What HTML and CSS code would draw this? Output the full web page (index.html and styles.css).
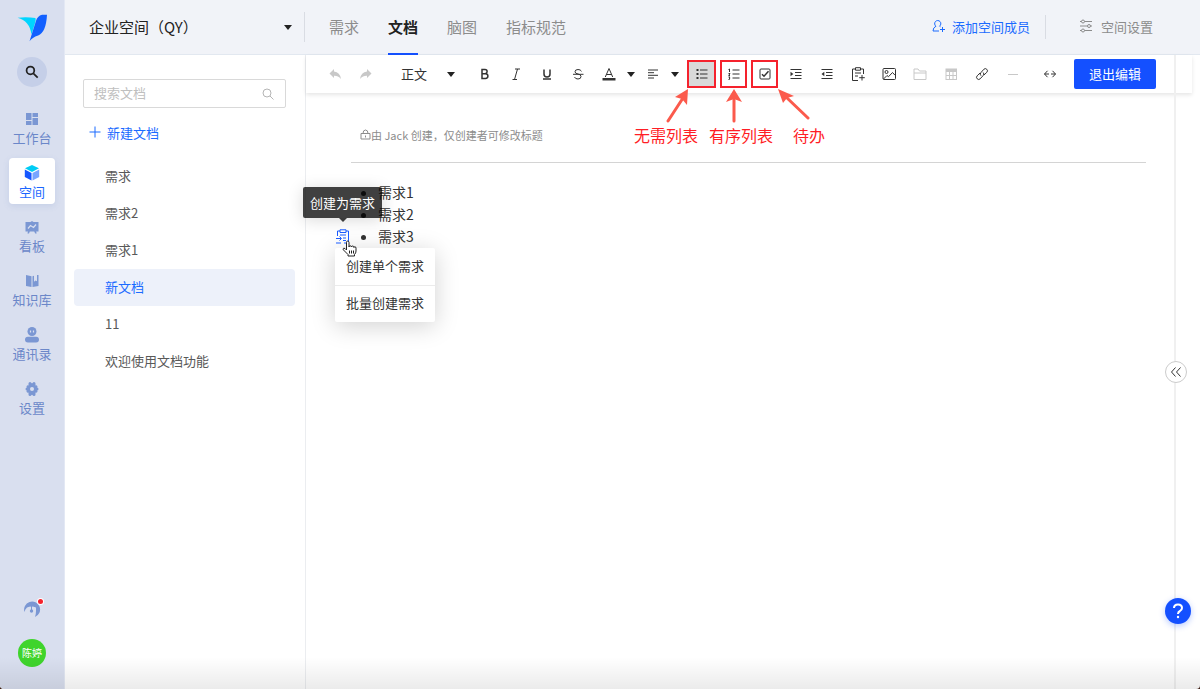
FILE: index.html
```html
<!DOCTYPE html>
<html lang="zh-CN">
<head>
    <meta charset="UTF-8">
    <meta name="viewport" content="width=device-width, initial-scale=1.0">
    <title>企业空间 - 文档</title>
    <link rel="stylesheet" href="styles.css">
</head>
<body>
<div class="app">
    <aside class="sidebar">
        <svg class="logo" viewBox="48 42 94 84">
            <path fill="#00d5ff" d="M50 53Q76 49 104 54Q106 60 103 68L92 104Q86 62 50 53Z"/>
            <path fill="#1260ff" d="M139 44H124Q110 47 105 64L86 124Q94 113 112 107Q136 98 139 44Z"/>
        </svg>
        <button class="search-btn" aria-label="搜索">
            <svg viewBox="0 0 16 16"><circle cx="6.2" cy="6.2" r="4.4"/><path d="M9.5 9.5L14.5 14.5"/></svg>
        </button>
        <nav class="nav">
            <a href="#"><svg viewBox="0 0 16 16"><path d="M2 2h5.500v7H2zM8.500 2H14v4H8.500zM2 10h5.500v4H2zM8.500 7H14v7H8.500z"/></svg>工作台</a>
            <a href="#" class="active"><svg viewBox="0 0 16 16"><path fill="#00ccf5" d="M8 0l7 3.2L8 7 1 3.2z"/><path fill="#1557ff" d="M.8 4.5L7.5 8v7.6L.8 12z"/><path fill="#78a5ff" d="M15.2 4.5L8.5 8v7.6l6.7-3.6z"/></svg>空间</a>
            <a href="#"><svg viewBox="0 0 16 16"><path d="M1.500 3h5L8 2l1.500 1h5v9.500h-13zM4 12h2l-1 2.500H3.500zM10 12h2l.7 2.500h-1.500z"/><path class="cut" d="M4 9.500l2.500-3 3 2L12 5.500"/></svg>看板</a>
            <a href="#"><svg viewBox="0 0 16 16"><path d="M2 2l5.500 1.200V14L2 13zM8.500 3.200L10 2.800v6l1.500-1.300L13 8.300V2h1.500v11l-6 1z"/></svg>知识库</a>
            <a href="#"><svg viewBox="0 0 16 16"><circle cx="8" cy="4.500" r="4.500"/><rect x="1" y="9.700" width="14" height="5.800" rx="2.900"/><path class="cut" d="M6.500 3.500v2M9.500 3.500v2"/></svg>通讯录</a>
            <a href="#"><svg viewBox="0 0 16 16"><path class="lobes" d="M8 3.500v9M4 5.700l8 4.600M4 10.300l8-4.600"/><path class="lobes" d="M6 2.500v11M10 2.500v11M3 8h10"/><circle class="hole" cx="8" cy="8" r="2"/></svg>设置</a>
        </nav>
        <div class="sidebar-foot">
            <button class="service" aria-label="客服">
                <svg viewBox="0 0 18 18"><path d="M1.500 12A8 8 0 1 1 12 17Q13 14 13 11V7.500q-4.500-2-9 0Q2 9 1.500 12z"/><path class="pin" d="M8.500 6v4.500"/><circle class="knob" cx="8.500" cy="11" r="1.700"/></svg>
                <span class="dot"></span>
            </button>
            <button class="avatar">陈婷</button>
        </div>
    </aside>

    <div class="workspace">
        <header class="header">
            <div class="space-select">
                <select aria-label="空间">
                    <option>企业空间（QY）</option>
                </select>
            </div>
            <nav class="tabs">
                <a href="#">需求</a>
                <a href="#" class="active">文档</a>
                <a href="#">脑图</a>
                <a href="#">指标规范</a>
            </nav>
            <a href="#" class="add-member">
                <svg viewBox="0 0 14 14"><path d="M4 7.200a3.100 3.100 0 1 1 3.500 0M4 7.200Q1 8.500 1 12h6M7.500 7.200l1 .6M10.500 8v5M8 10.500h5"/></svg>添加空间成员
            </a>
            <a href="#" class="space-setting">
                <svg viewBox="0 0 14 14"><path d="M1 2.500h1.500M5.500 2.500H13M1 7h7.500M11.500 7H13M1 11.500h1.500M5.500 11.500H13"/><circle cx="4" cy="2.500" r="1.500"/><circle cx="10" cy="7" r="1.500"/><circle cx="4" cy="11.500" r="1.500"/></svg>空间设置
            </a>
        </header>

        <div class="body">
            <section class="docs">
                <label class="doc-search">
                    <input type="text" placeholder="搜索文档" aria-label="搜索文档">
                    <svg viewBox="0 0 14 14"><circle cx="6" cy="6" r="4"/><path d="M9 9l3.500 3.500"/></svg>
                </label>
                <button class="new-doc">
                    <svg viewBox="0 0 12 12"><path d="M6 .5v11M.5 6h11"/></svg>新建文档
                </button>
                <div class="doc-list">
                    <a href="#">需求</a>
                    <a href="#">需求2</a>
                    <a href="#">需求1</a>
                    <a href="#" class="active">新文档</a>
                    <a href="#">11</a>
                    <a href="#">欢迎使用文档功能</a>
                </div>
            </section>

            <main class="editor">
                <div class="toolbar">
                    <button class="tool off" aria-label="撤销"><svg viewBox="0 0 14 14"><path class="fill" d="M6 2v2.500q6 .5 7 7.500Q10 8.500 6 8.700V11L1.500 6.500z"/></svg></button>
                    <button class="tool off" aria-label="重做"><svg viewBox="0 0 14 14"><path class="fill" d="M8 2v2.500Q2 5 1 12q3-3.500 7-3.300V11l4.500-4.500z"/></svg></button>
                    <div class="format">
                        <select aria-label="段落格式">
                            <option>正文</option>
                        </select>
                    </div>
                    <button class="tool" aria-label="加粗"><svg viewBox="0 0 14 14"><path class="bold" d="M4 2.500v9h3.500a2.300 2.300 0 0 0 0-4.800H4h3a2.100 2.100 0 0 0 0-4.200z"/></svg></button>
                    <button class="tool" aria-label="斜体"><svg viewBox="0 0 14 14"><path d="M6 2h5M3.500 12.500h4.500M8.500 2l-3 10.500"/></svg></button>
                    <button class="tool" aria-label="下划线"><svg viewBox="0 0 14 14"><path class="bold" d="M4 2.500V7q0 3 3 3t3-3V2.500M3 12h8"/></svg></button>
                    <button class="tool" aria-label="删除线"><svg viewBox="0 0 14 14"><path d="M10.500 4.300Q9.500 2.500 7 2.500q-3 0-3 2.300Q4 6.500 7 7t3 2.500q0 2.500-3 2.500-2.700 0-3.500-2M2 7.300h10.500"/></svg></button>
                    <button class="tool" aria-label="字体颜色"><svg viewBox="0 0 14 14"><path d="M3.300 10L7 1.500 10.700 10M4.500 7.500h5"/><path class="fill" d="M.5 11h13v2.500H.5z"/></svg></button>
                    <button class="caret" aria-label="选择颜色"></button>
                    <button class="tool flush" aria-label="对齐"><svg viewBox="0 0 14 14"><path d="M2 3h10M2 5.700h6M2 8.300h10M2 11h6"/></svg></button>
                    <button class="caret" aria-label="选择对齐"></button>
                    <button class="tool marked on" aria-label="无序列表"><svg viewBox="0 0 14 14"><path d="M5 3h7.500M5 7h7.500M5 11h7.500"/><path class="fill" d="M1.500 2h2v2h-2zM1.500 6h2v2h-2zM1.500 10h2v2h-2z"/></svg></button>
                    <button class="tool marked" aria-label="有序列表"><svg viewBox="0 0 14 14"><path d="M5.500 3h7M5.500 7h7M5.500 11h7M1.500 2.500l1-.5v3M1.500 6.500h1.500l-1.300 2H3M1.500 10H3l-.8 1L3 12l-1.500.5"/></svg></button>
                    <button class="tool marked" aria-label="待办"><svg viewBox="0 0 14 14"><rect x="2" y="2" width="10" height="10" rx="1"/><path class="bold" d="M4 7.200l2 2 4.500-5"/></svg></button>
                    <button class="tool" aria-label="增加缩进"><svg viewBox="0 0 14 14"><path d="M1.500 2.500h11M6 5.500h6.500M6 8.500h6.500M1.500 11.500h11"/><path class="fill" d="M1.500 4.700v4.600L4.300 7z"/></svg></button>
                    <button class="tool" aria-label="减少缩进"><svg viewBox="0 0 14 14"><path d="M1.500 2.500h11M6 5.500h6.500M6 8.500h6.500M1.500 11.500h11"/><path class="fill" d="M4.300 4.700v4.600L1.500 7z"/></svg></button>
                    <button class="tool" aria-label="插入需求"><svg viewBox="0 0 14 14"><path d="M4 2H1.500v11.500H7M10 2h2.500v5M4.500.7h5v2.500h-5zM4 6h6M4 9h3M11 8v5.500M8.200 10.700h5.600"/></svg></button>
                    <button class="tool" aria-label="图片"><svg viewBox="0 0 14 14"><rect x="1" y="1.500" width="12.500" height="11" rx="1"/><circle cx="4.500" cy="5" r="1.500"/><path d="M1.500 12L5 8.500l1.500 1.200 4-4.200 2.500 2.700"/></svg></button>
                    <button class="tool off" aria-label="文件"><svg viewBox="0 0 14 14"><path d="M1 2h4l1.500 2H13v8.500H1zM1 6h12"/></svg></button>
                    <button class="tool off" aria-label="表格"><svg viewBox="0 0 14 14"><rect x="2" y="2" width="10.500" height="10.500"/><path class="fill" d="M2 2h10.500v3H2z"/><path d="M2 8.500h10.500M5.500 4v8.500M9 4v8.500"/></svg></button>
                    <button class="tool" aria-label="链接"><svg viewBox="0 0 14 14"><path d="M6 8.700q-1.700-1.500 0-3.200l2.800-3.200q1.500-1.500 3 0t0 3L9 8M8.200 5.500q1.500 1.500 0 3l-3 3.300q-1.500 1.500-3 0t0-3L5 6"/></svg></button>
                    <button class="tool off" aria-label="分割线"><svg viewBox="0 0 14 14"><path d="M2 7.500h10"/></svg></button>
                    <button class="tool wide" aria-label="页宽"><svg viewBox="0 0 14 14"><path d="M4.500 3.800L1.500 7l3 3.200M9.500 3.800l3 3.200-3 3.200M1.500 7H6M8 7h4.500"/></svg></button>
                    <button class="exit">退出编辑</button>
                </div>

                <div class="notes">
                    <svg viewBox="0 0 200 36">
                        <path d="M36 34L51 11M102 34V12M176 31L154 10"/>
                        <path class="head" d="M56 2L43 10l7 2 5 6zM102 2l-8 13 8-3 8 3zM146 2l5 14 4-5 7-2z"/>
                    </svg>
                    <div class="note-labels"><span>无需列表</span><span>有序列表</span><span>待办</span></div>
                </div>

                <article class="page">
                    <p class="meta">
                        <svg viewBox="0 0 11 11"><path d="M1 4.500h9v5.500H1zM3 4.500q0-3.500 2.500-3.500T8 4.500M5.500 6.500v2"/></svg>由 Jack 创建，仅创建者可修改标题
                    </p>
                    <ul class="content">
                        <li>需求1</li>
                        <li>需求2</li>
                        <li>需求3
                            <div class="block-tools">
                                <button class="convert" aria-label="创建为需求"><svg viewBox="0 0 16 16"><path d="M2.500 7V2H5M11 2h2.500v12H9M5 .8h6v2.700H5zM5 6h6M8 9h3M8 11.500h3M1 9.500h5M1 14h5M4.500 7.500l2 2-2 2"/></svg></button>
                                <div class="tooltip">创建为需求</div>
                                <div class="menu">
                                    <button>创建单个需求</button>
                                    <button>批量创建需求</button>
                                </div>
                                <svg class="hand" viewBox="0 0 15 17"><path d="M4.500 10V2.500q0-1.500 1.200-1.500T7 2.500V7q0-1.200 1.200-1.200T9.500 7q0-1 1.200-1t1.200 1.500q.2-.8 1.100-.8t1 1.500V11q0 2-1.500 3.500V16H6v-1.500L1.300 9.800Q.7 8.500 1.800 8.200T4.500 10zM7.500 10.500v3M9.500 10.500v3M11.500 10.500v3"/></svg>
                            </div>
                        </li>
                    </ul>
                </article>

                <div class="rail">
                    <button class="collapse" aria-label="展开"><svg viewBox="0 0 12 12"><path d="M5.500 1.500L1.500 6l4 4.500M10.500 1.500L6.500 6l4 4.500"/></svg></button>
                    <button class="help" aria-label="帮助"><svg viewBox="0 0 14 16"><path d="M3 5q0-3.500 4-3.500T11 5q0 1.700-2 3-2 1-2 3"/><circle cx="7" cy="14" r="1.200"/></svg></button>
                </div>
            </main>
        </div>
    </div>
    <div class="fade"></div>
</div>
</body>
</html>
```

FILE: styles.css
```css
* {
    box-sizing: border-box;
}
body {
    margin: 0;
    background: #3b1c12;
    color: #333;
    font-family: "Noto Sans CJK SC", sans-serif;
    font-size: 13px;
}
a {
    color: inherit;
    text-decoration: none;
}
button, select, input {
    font: inherit;
    color: inherit;
    border: none;
    background: none;
    padding: 0;
    margin: 0;
    outline: none;
}
button {
    cursor: pointer;
}
select {
    appearance: none;
}
svg {
    display: block;
    flex: none;
    fill: none;
    stroke: currentColor;
}
.app {
    position: relative;
    display: flex;
    min-height: 100vh;
    background: #fff;
    border-radius: 0 0 4px 4px;
    overflow: hidden;
}
.fade {
    position: absolute;
    left: 0;
    right: 0;
    bottom: 0;
    height: 32px;
    background: linear-gradient(rgba(0, 0, 0, 0), rgba(0, 0, 0, 0.08));
    pointer-events: none;
}

/* sidebar */
.sidebar {
    flex: none;
    width: 65px;
    padding-top: 14px;
    display: flex;
    flex-direction: column;
    align-items: center;
    background: #d9dfef;
    border-right: 1px solid #e3e8f4;
}
.logo {
    width: 31px;
    height: 28px;
    stroke: none;
}
.search-btn {
    width: 30px;
    height: 30px;
    margin-top: 15px;
    display: flex;
    align-items: center;
    justify-content: center;
    border-radius: 50%;
    background: #c5cfe8;
    color: #222;
}
.search-btn svg {
    width: 14px;
    height: 14px;
    stroke-width: 2;
}
.nav {
    display: flex;
    flex-direction: column;
    gap: 8px;
    margin-top: 17px;
}
.nav a {
    width: 46px;
    height: 46px;
    padding-top: 7px;
    display: flex;
    flex-direction: column;
    align-items: center;
    border-radius: 4px;
    color: #6b87c9;
    line-height: 21px;
}
.nav svg {
    width: 16px;
    height: 16px;
    fill: #7b97d3;
    stroke: none;
}
.nav .cut {
    fill: none;
    stroke: #d9dfef;
    stroke-width: 1.2;
}
.nav .lobes {
    stroke: #7b97d3;
    stroke-width: 3;
    stroke-linecap: round;
}
.nav .hole {
    fill: #d9dfef;
}
.nav .active {
    background: #fff;
    color: #1b66ff;
    box-shadow: 0 2px 6px rgba(90, 120, 190, 0.15);
}
.sidebar-foot {
    margin-top: auto;
    padding-bottom: 22px;
    display: flex;
    flex-direction: column;
    align-items: center;
    gap: 21px;
}
.service {
    position: relative;
}
.service svg {
    width: 18px;
    height: 18px;
    fill: #7b97d3;
    stroke: none;
}
.service .pin {
    stroke: #7b97d3;
}
.service .knob {
    fill: #7b97d3;
}
.dot {
    position: absolute;
    top: -1px;
    right: -2px;
    width: 5px;
    height: 5px;
    border-radius: 50%;
    background: #f5222d;
    box-shadow: 0 0 0 1px #fff;
}
.avatar {
    width: 28px;
    height: 28px;
    padding-bottom: 2px;
    border-radius: 50%;
    background: #3fd42c;
    color: #fff;
    font-size: 10px;
}

/* header */
.workspace {
    flex: 1;
    min-width: 0;
    display: flex;
    flex-direction: column;
}
.header {
    height: 55px;
    display: flex;
    align-items: center;
    background: #f1f3f8;
    border-bottom: 1px solid #e2e8f0;
}
.space-select, .format {
    display: flex;
    align-items: center;
}
.space-select {
    width: 240px;
    height: 30px;
    padding: 0 12px 0 24px;
    border-right: 1px solid #d9dce3;
}
.space-select select {
    flex: 1;
    padding-bottom: 2px;
    font-size: 15px;
    color: #222;
}
.space-select::after, .format::after, .caret::after {
    content: "";
    border: 4px solid transparent;
    border-top: 5px solid #222;
    border-bottom: none;
}
.tabs {
    align-self: stretch;
    display: flex;
    gap: 29px;
    margin-left: 24px;
    font-size: 15px;
    color: #8c8c8c;
}
.tabs a {
    height: 55px;
    line-height: 54px;
}
.tabs .active {
    color: #222;
    font-weight: bold;
    border-bottom: 2px solid #1450ff;
}
.add-member, .space-setting {
    display: flex;
    align-items: center;
    height: 24px;
    padding-bottom: 2px;
}
.add-member {
    margin-left: auto;
    padding-right: 15px;
    gap: 6px;
    color: #1b6bff;
    border-right: 1px solid #d9dce3;
}
.space-setting {
    padding-left: 33px;
    padding-right: 47px;
    gap: 8px;
    color: #8c8c8c;
}
.header svg {
    width: 14px;
    height: 14px;
}

/* document list */
.body {
    flex: 1;
    display: flex;
}
.docs {
    flex: none;
    width: 241px;
    padding: 24px 10px 0 9px;
    border-right: 1px solid #ebedf0;
}
.doc-search {
    height: 29px;
    margin: 0 9px;
    padding: 0 10px;
    display: flex;
    align-items: center;
    border: 1px solid #d9d9d9;
    border-radius: 2px;
}
.doc-search input {
    flex: 1;
    min-width: 0;
    padding-bottom: 2px;
}
.doc-search input::placeholder {
    color: #bfbfbf;
}
.doc-search svg {
    width: 14px;
    height: 14px;
    color: #b5b5b5;
}
.new-doc {
    display: flex;
    align-items: center;
    gap: 6px;
    height: 24px;
    margin: 12px 0 14px 15px;
    color: #1b6bff;
}
.new-doc svg {
    width: 12px;
    height: 12px;
}
.doc-list a {
    display: block;
    height: 37px;
    padding-left: 31px;
    line-height: 35px;
    color: #595959;
    border-radius: 4px;
}
.doc-list .active {
    background: #edf1fa;
    color: #1b6bff;
}

/* editor */
.editor {
    position: relative;
    flex: 1;
    min-width: 0;
}
.toolbar {
    display: flex;
    align-items: center;
    gap: 4px;
    height: 38px;
    margin-right: 8px;
    padding-left: 15px;
    box-shadow: 0 2px 4px rgba(0, 0, 0, 0.1);
}
.tool {
    flex: none;
    width: 27px;
    height: 28px;
    display: flex;
    align-items: center;
    justify-content: center;
}
.tool svg {
    width: 14px;
    height: 14px;
}
.tool .fill {
    fill: currentColor;
    stroke: none;
}
.tool .bold {
    stroke-width: 1.5;
}
.tool.off {
    color: #c8c8c8;
}
.tool.marked {
    border: 2px solid #f5222d;
}
.tool.on {
    width: 29px;
    background: #d9d9d9;
}
.tool.wide {
    width: 40px;
}
.tool.flush {
    margin-left: -4px;
}
.format {
    width: 84px;
    padding: 0 12px 0 18px;
}
.format select {
    flex: 1;
    min-width: 0;
    padding-bottom: 2px;
}
.caret {
    flex: none;
    width: 17px;
    height: 28px;
    margin-left: -4px;
    display: flex;
    align-items: center;
    justify-content: center;
}
.exit {
    flex: none;
    width: 82px;
    height: 30px;
    padding-bottom: 2px;
    border-radius: 2px;
    background: #1450ff;
    color: #fff;
}

/* callouts over the toolbar */
.notes {
    position: absolute;
    top: 32px;
    left: 326px;
    width: 200px;
    color: #ff1d25;
    font-size: 16px;
    line-height: 24px;
}
.notes svg {
    width: 200px;
    height: 36px;
    stroke: #fb5a4c;
    stroke-width: 3;
    stroke-linecap: round;
}
.notes .head {
    fill: #fb5a4c;
    stroke: none;
}
.note-labels {
    display: flex;
    padding-left: 2px;
    gap: 11px;
}
.note-labels span:last-child {
    margin-left: 9px;
}

.page {
    padding: 0 54px 0 45px;
}
.meta {
    display: flex;
    align-items: center;
    height: 70px;
    margin: 0;
    padding: 14px 0 0 9px;
    border-bottom: 1px solid #d4d4d4;
    color: #8c8c8c;
    font-size: 11px;
}
.meta svg {
    width: 11px;
    height: 11px;
}
.content {
    margin: 18px 0 0;
    padding-left: 27px;
    font-size: 14px;
    line-height: 22px;
}
.content li {
    position: relative;
}
.block-tools {
    position: absolute;
    top: 1px;
    left: -43px;
    font-size: 13px;
}
.convert {
    display: block;
    padding: 3px 0;
    color: #1b5cff;
}
.convert svg {
    width: 16px;
    height: 16px;
}
.tooltip {
    position: absolute;
    top: -39px;
    left: -32px;
    padding: 0 7px;
    line-height: 31px;
    white-space: nowrap;
    border-radius: 2px;
    background: rgba(0, 0, 0, 0.75);
    color: #fff;
    box-shadow: 0 2px 16px rgba(0, 0, 0, 0.15);
}
.tooltip::after {
    content: "";
    position: absolute;
    top: 100%;
    left: 50%;
    margin-left: -4px;
    border: 4px solid transparent;
    border-top-color: rgba(0, 0, 0, 0.75);
    border-bottom: none;
}
.menu {
    width: 100px;
    border-radius: 2px;
    background: #fff;
    box-shadow: 0 4px 24px rgba(0, 0, 0, 0.18);
}
.menu button {
    display: block;
    width: 100%;
    height: 37px;
    padding-bottom: 2px;
}
.menu button + button {
    border-top: 1px solid #ebebeb;
}
.hand {
    position: absolute;
    top: 14px;
    left: 7px;
    width: 15px;
    height: 17px;
    fill: #fff;
    stroke: #222;
}

/* right rail */
.rail {
    position: absolute;
    top: 0;
    right: 0;
    bottom: 0;
    width: 26px;
    display: flex;
    flex-direction: column;
    justify-content: flex-end;
    border-left: 2px solid #f0f0f0;
}
.collapse, .help {
    display: flex;
    align-items: center;
    justify-content: center;
    border-radius: 50%;
}
.collapse {
    width: 22px;
    height: 22px;
    margin: 0 0 215px -11px;
    border: 1px solid #ccc;
    background: #fff;
}
.collapse svg {
    width: 12px;
    height: 12px;
}
.help {
    width: 26px;
    height: 26px;
    margin: 0 0 65px -11px;
    background: #1450ff;
    color: #fff;
    box-shadow: 0 2px 6px rgba(20, 80, 255, 0.3);
}
.help svg {
    width: 14px;
    height: 16px;
    stroke-width: 2;
}
.help circle {
    fill: #fff;
    stroke: none;
}
```
